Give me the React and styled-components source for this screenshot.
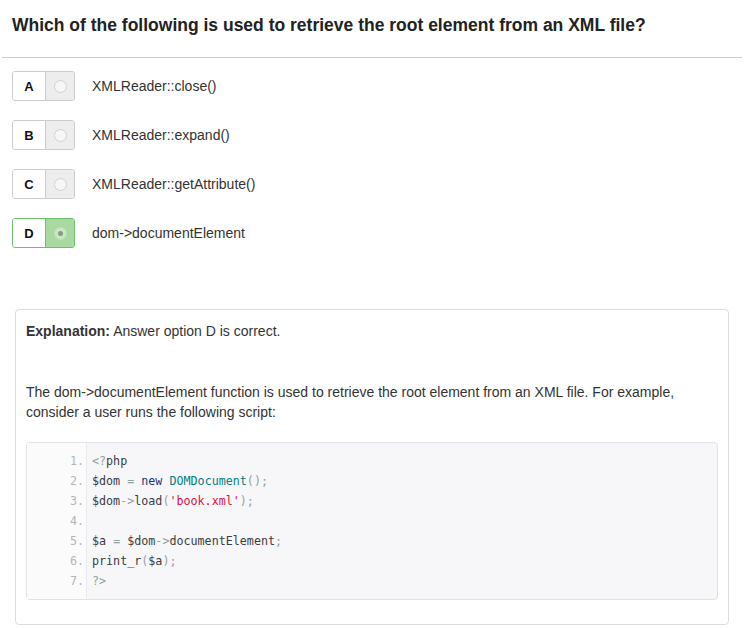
import React from "react";
import styled, { createGlobalStyle } from "styled-components";

const GlobalStyle = createGlobalStyle`
	html, body {
		margin: 0;
		padding: 0;
		background: #fff;
	}
	body {
		font-family: "Liberation Sans", Arial, sans-serif;
		font-size: 14px;
		color: #333;
	}
`;

const PageStyled = styled.div`
	width: 749px;
	padding: 0 7px 0 2px;
	box-sizing: border-box;
`;

const QuestionStyled = styled.h3`
	margin: 0;
	padding: 14px 10px 21px;
	font-size: 17.5px;
	line-height: 22px;
	font-weight: bold;
	color: #222;
	border-bottom: 1px solid #ccc;
`;

const OptionListStyled = styled.div`
	display: flex;
	flex-direction: column;
	gap: 19px;
	padding: 13px 0 0 10px;
`;

const OptionRowStyled = styled.div`
	display: flex;
	align-items: center;
	gap: 17px;
`;

const OptionBoxStyled = styled.div`
	display: flex;
	height: 30px;
	width: 63px;
	box-sizing: border-box;
	border: 1px solid ${(p) => (p.$checked ? "#6fbf6a" : "#ccc")};
	border-radius: 3px;
	overflow: hidden;
`;

const LetterStyled = styled.div`
	width: 32px;
	display: flex;
	align-items: center;
	justify-content: center;
	font-weight: bold;
	font-size: 13px;
	color: #111;
	background: #fff;
	border-right: 1px solid ${(p) => (p.$checked ? "#6fbf6a" : "#ccc")};
`;

const RadioCellStyled = styled.div`
	flex: 1;
	display: flex;
	align-items: center;
	justify-content: center;
	background: ${(p) => (p.$checked ? "#a7d9a0" : "#ededed")};
`;

const RadioStyled = styled.span`
	width: 13px;
	height: 13px;
	box-sizing: border-box;
	border-radius: 50%;
	border: 1px solid ${(p) => (p.$checked ? "#bfe2b8" : "#d2d2d2")};
	background: ${(p) => (p.$checked ? "#c9e7c2" : "#f6f6f6")};
	display: flex;
	align-items: center;
	justify-content: center;
	&::after {
		content: "";
		display: ${(p) => (p.$checked ? "block" : "none")};
		width: 5px;
		height: 5px;
		border-radius: 50%;
		background: #8e978d;
	}
`;

const OptionTextStyled = styled.span`
	font-size: 14px;
	color: #333;
`;

const PanelStyled = styled.div`
	margin: 61px 0 0 13px;
	width: 714px;
	box-sizing: border-box;
	border: 1px solid #ddd;
	border-radius: 4px;
	padding: 11px 10px 24px;
	line-height: 20px;
	font-size: 14px;
	color: #333;
`;

const ParagraphStyled = styled.p`
	margin: 0 0 ${(p) => p.$after || 0}px;
`;

const CodeBoxStyled = styled.div`
	display: grid;
	grid-template-columns: 60px 1fr;
	background: #f7f7f9;
	border: 1px solid #e1e1e8;
	border-radius: 4px;
	padding: 8px 0;
	font-family: "DejaVu Sans Mono", "Liberation Mono", monospace;
	font-size: 11.7px;
	line-height: 20px;
`;

const GutterStyled = styled.div`
	background: #fbfbfc;
	border-right: 1px solid #ececf0;
	margin: -8px 0;
	padding: 8px 2px 8px 0;
	text-align: right;
	color: #b4b4bc;
`;

const CodeStyled = styled.div`
	padding-left: 5px;
	white-space: pre;
	color: #48484c;
`;

const Tok = styled.span`
	color: ${(p) =>
		({
			pun: "#93a1a1",
			str: "#d14",
			kwd: "#1e347b",
			typ: "#008080",
			pln: "#3c3c40",
		})[p.$t || "pln"]};
`;

const options = [
	{ letter: "A", text: "XMLReader::close()" },
	{ letter: "B", text: "XMLReader::expand()" },
	{ letter: "C", text: "XMLReader::getAttribute()" },
	{ letter: "D", text: "dom->documentElement", checked: true },
];

const codeLines = [
	[["pun", "<?"], ["pln", "php"]],
	[["pln", "$dom "], ["pun", "="], ["pln", " "], ["kwd", "new"], ["pln", " "], ["typ", "DOMDocument"], ["pun", "();"]],
	[["pln", "$dom"], ["pun", "->"], ["pln", "load"], ["pun", "("], ["str", "'book.xml'"], ["pun", ");"]],
	[],
	[["pln", "$a "], ["pun", "="], ["pln", " $dom"], ["pun", "->"], ["pln", "documentElement"], ["pun", ";"]],
	[["pln", "print_r"], ["pun", "("], ["pln", "$a"], ["pun", ");"]],
	[["pun", "?>"]],
];

function App() {
	return (
		<>
			<GlobalStyle />
			<PageStyled>
				<QuestionStyled>
					Which of the following is used to retrieve the root element from an XML file?
				</QuestionStyled>
				<OptionListStyled>
					{options.map((o) => (
						<OptionRowStyled key={o.letter}>
							<OptionBoxStyled $checked={o.checked}>
								<LetterStyled $checked={o.checked}>{o.letter}</LetterStyled>
								<RadioCellStyled $checked={o.checked}>
									<RadioStyled $checked={o.checked} />
								</RadioCellStyled>
							</OptionBoxStyled>
							<OptionTextStyled>{o.text}</OptionTextStyled>
						</OptionRowStyled>
					))}
				</OptionListStyled>
				<PanelStyled>
					<ParagraphStyled $after={41}>
						<strong>Explanation:</strong> Answer option D is correct.
					</ParagraphStyled>
					<ParagraphStyled $after={20}>
						The dom-&gt;documentElement function is used to retrieve the root element from an XML file. For example,
						consider a user runs the following script:
					</ParagraphStyled>
					<CodeBoxStyled>
						<GutterStyled>
							{codeLines.map((_, i) => (
								<div key={i}>{i + 1}.</div>
							))}
						</GutterStyled>
						<CodeStyled>
							{codeLines.map((line, i) => (
								<div key={i}>
									{line.length === 0
										? " "
										: line.map(([t, s], j) => (
												<Tok key={j} $t={t}>
													{s}
												</Tok>
											))}
								</div>
							))}
						</CodeStyled>
					</CodeBoxStyled>
				</PanelStyled>
			</PageStyled>
		</>
	);
}

export default App;
